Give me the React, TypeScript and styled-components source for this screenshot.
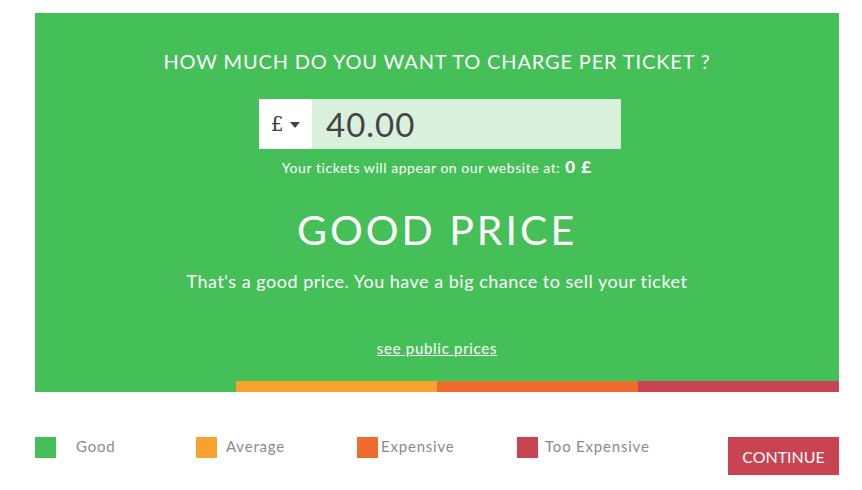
import React from "react";
import styled, { createGlobalStyle } from "styled-components";

const Global = createGlobalStyle`
  html, body { margin: 0; padding: 0; background: #fff; }
  body { font-family: Lato, "Open Sans", sans-serif; }
`;

const GREEN = "#45bf57";

const Page = styled.div`
  width: 804px;
  padding: 13px 0 0 35px;
`;

const Panel = styled.section`
  background: ${GREEN};
  display: flex;
  flex-direction: column;
  align-items: center;
  color: #fff;
  padding: 36px 0 24px;
`;

const Heading = styled.h1`
  margin: 0;
  font-size: 20px;
  line-height: 24px;
  font-weight: 400;
  letter-spacing: 0.85px;
`;

const InputRow = styled.div`
  margin: 26px 0 0 6px;
  display: flex;
  height: 50px;
  width: 362px;
`;

const Currency = styled.div`
  width: 53px;
  background: #fff;
  color: #444;
  display: flex;
  align-items: center;
  justify-content: center;
  gap: 7px;
  font-size: 20px;
  font-family: "DejaVu Serif", serif;
`;

const Caret = styled.span`
  width: 0;
  height: 0;
  margin-top: 2px;
  border-left: 5.5px solid transparent;
  border-right: 5.5px solid transparent;
  border-top: 6px solid #444;
`;

const Value = styled.div`
  flex: 1;
  background: #d9f0dc;
  color: #444;
  font-size: 33px;
  display: flex;
  align-items: center;
  padding-left: 14px;
  letter-spacing: 1px;
`;

const Note = styled.p`
  margin: 9px 0 0;
  font-size: 14px;
  line-height: 18px;
  letter-spacing: 0.55px;
`;

const Strong = styled.b`
  font-size: 17px;
  font-weight: 900;
  margin-left: 5px;
  letter-spacing: 1px;
`;

const Verdict = styled.h2`
  margin: 29px 0 0;
  font-size: 41px;
  line-height: 48px;
  font-weight: 400;
  letter-spacing: 3px;
`;

const Sub = styled.p`
  margin: 16px 0 0;
  font-size: 18px;
  line-height: 22px;
  letter-spacing: 0.5px;
`;

const Link = styled.a`
  margin-top: 47px;
  font-size: 15px;
  line-height: 18px;
  color: #fff;
  text-decoration: underline;
  letter-spacing: 0.7px;
`;

const Bar = styled.div`
  display: grid;
  grid-template-columns: repeat(4, 1fr);
  height: 11px;
`;

const Seg = styled.div<{ $c: string }>`
  background: ${(p) => p.$c};
`;

const Footer = styled.div`
  margin-top: 45px;
  display: flex;
  align-items: flex-start;
`;

const Legend = styled.div`
  display: grid;
  grid-template-columns: 161px 161px 160px 193px;
`;

const Item = styled.div`
  display: flex;
  align-items: center;
  height: 21px;
`;

const Swatch = styled.span<{ $c: string }>`
  width: 21px;
  height: 21px;
  background: ${(p) => p.$c};
  flex: none;
`;

const Label = styled.span<{ $gap: number }>`
  margin-left: ${(p) => p.$gap}px;
  margin-top: -3px;
  color: #8a8a8e;
  font-size: 15px;
  letter-spacing: 0.8px;
`;

const Continue = styled.button`
  margin-left: auto;
  width: 111px;
  height: 38px;
  background: #c84452;
  color: #fff;
  border: none;
  font-family: Lato, sans-serif;
  font-size: 16px;
  padding: 0;
`;

const segs = ["#45bf57", "#f7a22e", "#ef6b2e", "#c84452"];
const legend = [
  { c: "#45bf57", t: "Good", g: 20 },
  { c: "#f7a22e", t: "Average", g: 9 },
  { c: "#ef6b2e", t: "Expensive", g: 3 },
  { c: "#c84452", t: "Too Expensive", g: 7 },
];

export default function App() {
  return (
    <Page>
      <Global />
      <Panel>
        <Heading>HOW MUCH DO YOU WANT TO CHARGE PER TICKET ?</Heading>
        <InputRow>
          <Currency>
            £<Caret />
          </Currency>
          <Value>40.00</Value>
        </InputRow>
        <Note>
          Your tickets will appear on our website at:<Strong>0 £</Strong>
        </Note>
        <Verdict>GOOD PRICE</Verdict>
        <Sub>That's a good price. You have a big chance to sell your ticket</Sub>
        <Link href="#">see public prices</Link>
      </Panel>
      <Bar>
        {segs.map((c) => (
          <Seg key={c} $c={c} />
        ))}
      </Bar>
      <Footer>
        <Legend>
          {legend.map((l) => (
            <Item key={l.t}>
              <Swatch $c={l.c} />
              <Label $gap={l.g}>{l.t}</Label>
            </Item>
          ))}
        </Legend>
        <Continue>CONTINUE</Continue>
      </Footer>
    </Page>
  );
}
